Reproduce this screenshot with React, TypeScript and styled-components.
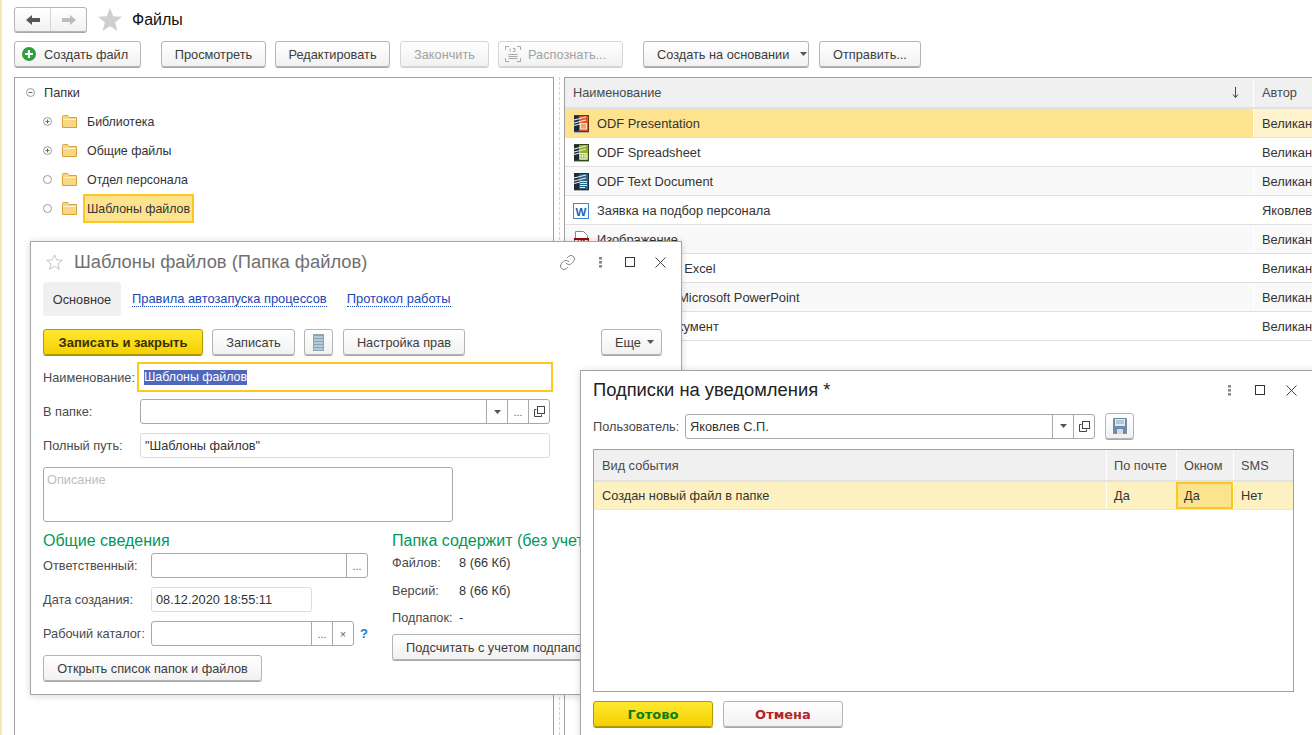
import React from 'react';
import styled, { createGlobalStyle } from 'styled-components';
import { Link } from 'lucide-react';

const GlobalStyle = createGlobalStyle`
  html, body {
    margin: 0;
    padding: 0;
    background: #fff;
  }
  body {
    font-family: "Liberation Sans", Arial, sans-serif;
    font-size: 12.75px;
    color: #333;
  }
  * {
    box-sizing: border-box;
  }
`;

const Page = styled.div`
  position: relative;
  width: 1312px;
  height: 735px;
  overflow: hidden;
  display: flex;
  flex-direction: column;
  padding-left: 12px;
  border-left: 2px solid #f6e8b8;
`;

const TopBar = styled.div`
  display: flex;
  align-items: center;
  height: 25px;
  margin-top: 7px;
`;

const NavGroup = styled.div`
  display: flex;
  width: 73px;
  height: 25px;
  border: 1px solid #b4b4b4;
  border-radius: 3px;
  box-shadow: 0 1px 0 #a8a8a8;
  background: linear-gradient(#fff, #f1f1f1);
`;

const NavCell = styled.div<{ $divided?: boolean }>`
  flex: 1;
  display: flex;
  align-items: center;
  justify-content: center;
  border-left: ${(p) => (p.$divided ? '1px solid #d4d4d4' : 'none')};
`;

const FavStar = styled.svg`
  margin-left: 11px;
`;

const PageTitle = styled.div`
  margin-left: 10px;
  font-size: 16px;
  color: #111;
`;

const Toolbar = styled.div`
  display: flex;
  height: 26px;
  margin-top: 9px;
`;

const Button = styled.div<{ $w: number; $ml?: number; $disabled?: boolean; $pl?: number; $gap?: number }>`
  display: flex;
  align-items: center;
  justify-content: ${(p) => (p.$pl ? 'flex-start' : 'center')};
  gap: ${(p) => p.$gap ?? 6}px;
  flex: none;
  width: ${(p) => p.$w}px;
  height: 26px;
  margin-left: ${(p) => p.$ml ?? 0}px;
  padding-left: ${(p) => p.$pl ?? 0}px;
  border: 1px solid ${(p) => (p.$disabled ? '#d6d6d6' : '#b4b4b4')};
  border-radius: 3px;
  box-shadow: 0 1px 0 ${(p) => (p.$disabled ? '#d0d0d0' : '#a8a8a8')};
  background: linear-gradient(#fff, #f1f1f1);
  color: ${(p) => (p.$disabled ? '#a2a2a2' : '#3c3c3c')};
  white-space: nowrap;
`;

const PrimaryButton = styled(Button)`
  border-color: #b09a00;
  box-shadow: 0 1px 0 #a89400;
  background: linear-gradient(#ffe832, #f5d000);
  color: #3a3000;
  font-weight: bold;
  font-size: 13px;
`;

const DialogButton = styled(Button)<{ $tone: string }>`
  font-family: "DejaVu Sans", sans-serif;
  font-weight: bold;
  font-size: 13px;
  color: ${(p) => p.$tone};
`;

const DialogPrimary = styled(DialogButton)`
  border-color: #b09a00;
  box-shadow: 0 1px 0 #a89400;
  background: linear-gradient(#ffe832, #f5d000);
`;

const Workspace = styled.div`
  flex: 1;
  display: flex;
  min-height: 0;
  margin-top: 10px;
`;

const TreePanel = styled.div`
  flex: none;
  width: 540px;
  border: 1px solid #a0a0a0;
  border-bottom: none;
`;

const TreeRow = styled.div<{ $indent: number }>`
  display: flex;
  align-items: center;
  height: 29px;
  padding-left: ${(p) => p.$indent}px;
`;

const Marker = styled.svg<{ $mr: number }>`
  flex: none;
  margin-right: ${(p) => p.$mr}px;
`;

const TreeLabel = styled.div<{ $selected?: boolean }>`
  display: flex;
  align-items: center;
  height: 29px;
  margin-left: 6px;
  padding: 0 2px;
  font-size: 12.4px;
  border: 2px solid ${(p) => (p.$selected ? '#fcc81e' : 'transparent')};
  background: ${(p) => (p.$selected ? '#fee38f' : 'transparent')};
`;

const Splitter = styled.div`
  flex: none;
  width: 10px;
  display: flex;
  justify-content: center;
  &::before {
    content: '';
    border-left: 1px dashed #d4d4d4;
  }
`;

const ListPanel = styled.div`
  flex: none;
  width: 800px;
  border-top: 1px solid #a0a0a0;
  border-left: 1px solid #a0a0a0;
`;

const ListHead = styled.div`
  display: grid;
  grid-template-columns: 688px 1fr;
  height: 31px;
  background: #f0f0f0;
  border-bottom: 2px solid #e2e2e2;
  color: #4a4a4a;
`;

const HeadCell = styled.div<{ $divided?: boolean }>`
  display: flex;
  align-items: center;
  justify-content: space-between;
  padding: 0 14px 0 8px;
  border-left: ${(p) => (p.$divided ? '1px solid #fff' : 'none')};
`;

const ListRow = styled.div<{ $alt?: boolean }>`
  display: grid;
  grid-template-columns: 688px 1fr;
  height: 29px;
  border-bottom: 1px solid #e0e0e0;
  background: ${(p) => (p.$alt ? '#f9f9f9' : '#fff')};
`;

const ListCell = styled.div<{ $tint?: string; $divided?: boolean }>`
  display: flex;
  align-items: center;
  gap: 8px;
  padding-top: 1px;
  padding-left: 8px;
  border-left: ${(p) => (p.$divided ? '1px solid #fff' : 'none')};
  background: ${(p) => p.$tint ?? 'transparent'};
  font-size: 12.85px;
  white-space: nowrap;
  overflow: hidden;
`;

const Win = styled.div<{ $left: number; $top: number; $w: number }>`
  position: absolute;
  left: ${(p) => p.$left}px;
  top: ${(p) => p.$top}px;
  width: ${(p) => p.$w}px;
  background: #fff;
  border: 1px solid #a6a6a6;
  box-shadow: 0 1px 7px rgba(0, 0, 0, 0.16);
  padding: 0 12px;
`;

const WinHead = styled.div<{ $h: number }>`
  display: flex;
  align-items: center;
  height: ${(p) => p.$h}px;
`;

const WinStar = styled.svg`
  flex: none;
  margin-left: 3px;
  margin-right: 11px;
`;

const WinTitle = styled.div<{ $muted?: boolean }>`
  flex: none;
  font-size: 18.35px;
  color: ${(p) => (p.$muted ? '#707070' : '#222')};
  white-space: nowrap;
`;

const WinTools = styled.div<{ $ml: number }>`
  flex: none;
  display: flex;
  align-items: center;
  margin-left: ${(p) => p.$ml}px;
`;

const WinTool = styled.div<{ $w: number }>`
  display: flex;
  align-items: center;
  justify-content: center;
  width: ${(p) => p.$w}px;
`;

const Tabs = styled.div`
  display: flex;
  align-items: center;
  height: 34px;
`;

const ActiveTab = styled.div`
  display: flex;
  align-items: center;
  justify-content: center;
  width: 78px;
  height: 34px;
  background: #f0f0f0;
  border-radius: 3px;
`;

const TabLink = styled.div<{ $ml: number }>`
  margin-left: ${(p) => p.$ml}px;
  font-size: 12.9px;
  color: #1a46b8;
  border-bottom: 1px dotted #1a46b8;
  line-height: 14px;
  white-space: nowrap;
`;

const Commands = styled.div<{ $mt: number }>`
  display: flex;
  margin-top: ${(p) => p.$mt}px;
`;

const FormRow = styled.div<{ $mt: number; $h: number }>`
  display: flex;
  align-items: center;
  margin-top: ${(p) => p.$mt}px;
  height: ${(p) => p.$h}px;
`;

const Label = styled.div<{ $w: number }>`
  flex: none;
  width: ${(p) => p.$w}px;
  color: #4a4a4a;
  white-space: nowrap;
`;

const FocusInput = styled.div`
  display: flex;
  align-items: center;
  width: 416px;
  height: 30px;
  margin-left: -3px;
  padding-left: 5px;
  border: 2px solid #fcc81e;
`;

const Selection = styled.span`
  background: #4f68bd;
  color: #fff;
  font-size: 12.4px;
  line-height: 15px;
`;

const Field = styled.div<{ $w: number; $soft?: boolean }>`
  display: flex;
  align-items: stretch;
  flex: none;
  width: ${(p) => p.$w}px;
  height: 25px;
  border: 1px solid ${(p) => (p.$soft ? '#dcdcdc' : '#a8a8a8')};
  border-radius: 3px;
  background: #fff;
`;

const FieldText = styled.div`
  flex: 1;
  display: flex;
  align-items: center;
  padding-left: 4px;
  white-space: nowrap;
  color: #333;
`;

const FieldCell = styled.div`
  flex: none;
  display: flex;
  align-items: center;
  justify-content: center;
  width: 21px;
  border-left: 1px solid #a8a8a8;
  color: #666;
  font-size: 11px;
`;

const Memo = styled.div`
  width: 410px;
  height: 55px;
  margin-top: 9px;
  padding: 4px 3px;
  border: 1px solid #a8a8a8;
  border-radius: 3px;
  color: #bdbdbd;
`;

const Columns = styled.div`
  display: flex;
  padding-bottom: 13px;
`;

const LeftCol = styled.div`
  flex: none;
  width: 349px;
`;

const RightCol = styled.div`
  flex: none;
  width: 260px;
`;

const SectionTitle = styled.div`
  margin-top: 9px;
  height: 20px;
  line-height: 20px;
  font-size: 16px;
  color: #00985a;
  white-space: nowrap;
`;

const Value = styled.div`
  color: #333;
  white-space: nowrap;
`;

const Help = styled.div`
  margin-left: 6px;
  color: #1a7cc8;
  font-weight: bold;
  font-size: 13px;
`;

const Grid2 = styled.div`
  width: 701px;
  height: 243px;
  margin-top: 10px;
  border: 1px solid #a0a0a0;
`;

const GridHead = styled.div`
  display: grid;
  grid-template-columns: 512px 70px 57px 1fr;
  height: 32px;
  background: #f0f0f0;
  border-bottom: 2px solid #e2e2e2;
  color: #4a4a4a;
`;

const GridRow = styled.div`
  display: grid;
  grid-template-columns: 512px 70px 57px 1fr;
  height: 28px;
  background: #fdf1c2;
  border-bottom: 1px solid #e6e6e6;
`;

const GridCell = styled.div<{ $first?: boolean; $active?: boolean }>`
  display: flex;
  align-items: center;
  padding-left: ${(p) => (p.$first ? 8 : 7)}px;
  border-left: ${(p) => (p.$first || p.$active ? 'none' : '1px solid #fff')};
  ${(p) => p.$active && 'border: 2px solid #fcc81e; background: #fee38f; padding-left: 6px;'}
`;

const Footer = styled.div`
  display: flex;
  margin-top: 9px;
  padding-bottom: 12px;
`;

const Caret = () => (
  <svg width="7" height="4" viewBox="0 0 7 4">
    <path d="M0 0h7L3.5 4z" fill="#555" />
  </svg>
);

const OpenIcon = () => (
  <svg width="11" height="11" viewBox="0 0 11 11" fill="none" stroke="#444">
    <rect x="3.5" y="0.5" width="7" height="7" fill="#fff" />
    <path d="M2.5 3.5h-2v7h7v-2" />
  </svg>
);

const Dots = () => (
  <svg width="3" height="11" viewBox="0 0 3 11" fill="#8a8a8a">
    <rect y="0" width="3" height="2.6" />
    <rect y="4" width="3" height="2.6" />
    <rect y="8" width="3" height="2.6" />
  </svg>
);

const MaxIcon = () => (
  <svg width="10" height="10" viewBox="0 0 10 10" fill="none" stroke="#333">
    <rect x="0.5" y="0.5" width="9" height="9" />
  </svg>
);

const CloseIcon = () => (
  <svg width="11" height="11" viewBox="0 0 11 11" fill="none" stroke="#444">
    <path d="M0.5 0.5l10 10M10.5 0.5l-10 10" />
  </svg>
);

const TreeMark = ({ kind, mr }: { kind: 'minus' | 'plus' | 'leaf'; mr: number }) => (
  <Marker $mr={mr} width="9" height="9" viewBox="0 0 9 9" fill="none" stroke="#9a9a9a">
    <circle cx="4.5" cy="4.5" r="4" />
    {kind !== 'leaf' && <path d="M2.5 4.5h4" stroke="#666" />}
    {kind === 'plus' && <path d="M4.5 2.5v4" stroke="#666" />}
  </Marker>
);

const Folder = () => (
  <svg width="15" height="13" viewBox="0 0 15 13" style={{ flex: 'none' }}>
    <path d="M0.5 2.5V1.5a1 1 0 011-1h4l1.5 2h7.5v10h-14z" fill="#f7d684" stroke="#d9a13c" />
    <path d="M1 4.5h13" stroke="#fff3cf" />
  </svg>
);

type OdfKind = 'slides' | 'sheet' | 'text';

const odfTones: Record<OdfKind, { frame: string; body: string }> = {
  slides: { frame: '#7a2c10', body: '#dc5a1e' },
  sheet: { frame: '#33481a', body: '#93ae28' },
  text: { frame: '#14304a', body: '#2c6288' },
};

// dark page with the white ODF swoosh in the top corner and the type mark below
const OdfIcon = ({ kind }: { kind: OdfKind }) => (
  <svg width="16" height="18" viewBox="0 0 16 18" style={{ flex: 'none' }}>
    <rect x="1" y="0" width="15" height="17" fill={odfTones[kind].frame} />
    <rect x="6" y="1" width="9" height="15" fill={odfTones[kind].body} />
    <rect x="1" y="1" width="5" height="15" fill="#1c2a38" />
    <path d="M1 5l12-3M1 8l12-3M1 10.5l6-1.5" stroke="#e8ecef" strokeWidth="1.1" />
    {kind === 'slides' && <rect x="7.5" y="8.5" width="6" height="5.5" fill="#f6a070" stroke="#fbe2d0" />}
    {kind === 'sheet' && <path d="M7 9.5h7v5.5H7zM9.5 9.5V15M12 9.5V15M7 12h7" fill="none" stroke="#eef4c8" />}
    {kind === 'text' && <path d="M7 8.5h7M7 10.5h7M7 12.5h7M7 14.5h5" stroke="#dbe8f0" />}
    <rect x="1" y="17" width="15" height="1" fill="#b0b0b0" />
  </svg>
);

const WordIcon = () => (
  <svg width="16" height="16" viewBox="0 0 16 16" style={{ flex: 'none' }}>
    <rect x="0.5" y="0.5" width="15" height="15" fill="#fff" stroke="#3f86d0" />
    <text x="8" y="12.5" textAnchor="middle" fontSize="11.5" fontWeight="bold" fontFamily="Liberation Sans" fill="#1f5fae">
      W
    </text>
  </svg>
);

const PngIcon = () => (
  <svg width="16" height="17" viewBox="0 0 16 17" style={{ flex: 'none' }}>
    <path d="M2.5 0.5h8l4 4v11h-12z" fill="#fff" stroke="#888" />
    <rect x="1" y="7" width="15" height="9" fill="#8c1010" />
    <text x="8.5" y="14" textAnchor="middle" fontSize="6.5" fontWeight="bold" fontFamily="Liberation Sans" fill="#fff">
      PNG
    </text>
  </svg>
);

const files = [
  { name: 'ODF Presentation', author: 'Великанова Е.В.', icon: <OdfIcon kind="slides" /> },
  { name: 'ODF Spreadsheet', author: 'Великанова Е.В.', icon: <OdfIcon kind="sheet" /> },
  { name: 'ODF Text Document', author: 'Великанова Е.В.', icon: <OdfIcon kind="text" /> },
  { name: 'Заявка на подбор персонала', author: 'Яковлев С.П.', icon: <WordIcon /> },
  { name: 'Изображение', author: 'Великанова Е.В.', icon: <PngIcon /> },
  { name: 'Лист Microsoft Excel', author: 'Великанова Е.В.', icon: <OdfIcon kind="sheet" /> },
  { name: 'Презентация Microsoft PowerPoint', author: 'Великанова Е.В.', icon: <OdfIcon kind="slides" /> },
  { name: 'Текстовый документ', author: 'Великанова Е.В.', icon: <OdfIcon kind="text" /> },
];

const folders = [
  { name: 'Библиотека', kind: 'plus' as const },
  { name: 'Общие файлы', kind: 'plus' as const },
  { name: 'Отдел персонала', kind: 'leaf' as const },
  { name: 'Шаблоны файлов', kind: 'leaf' as const, selected: true },
];

const App: React.FC = () => {
  return (
    <Page>
      <GlobalStyle />
      <TopBar>
        <NavGroup>
          <NavCell>
            <svg width="14" height="10" viewBox="0 0 14 10">
              <path d="M0 5l6-5v3h8v4H6v3z" fill="#555" />
            </svg>
          </NavCell>
          <NavCell $divided>
            <svg width="14" height="10" viewBox="0 0 14 10">
              <path d="M14 5L8 0v3H0v4h8v3z" fill="#bcbcbc" />
            </svg>
          </NavCell>
        </NavGroup>
        <FavStar width="24" height="23" viewBox="0 0 24 23">
          <path d="M12 0l3.2 8.3 8.8.5-6.8 5.6 2.2 8.6L12 18.2 4.6 23l2.2-8.6L0 8.8l8.8-.5z" fill="#cfcfcf" />
        </FavStar>
        <PageTitle>Файлы</PageTitle>
      </TopBar>

      <Toolbar>
        <Button $w={127} $pl={7} $gap={8}>
          <svg width="14" height="14" viewBox="0 0 14 14">
            <circle cx="7" cy="7" r="7" fill="#2f9e3f" />
            <path d="M7 3v8M3 7h8" stroke="#fff" strokeWidth="2.2" />
          </svg>
          Создать файл
        </Button>
        <Button $w={105} $ml={20}>Просмотреть</Button>
        <Button $w={115} $ml={9}>Редактировать</Button>
        <Button $w={89} $ml={10} $disabled>Закончить</Button>
        <Button $w={125} $ml={9} $disabled $pl={6} $gap={7}>
          <svg width="16" height="16" viewBox="0 0 16 16" fill="none" stroke="#a8a8a8">
            <path d="M0.5 4V0.5H4M12 0.5h3.5V4M15.5 12v3.5H12M4 15.5H0.5V12" />
            <path d="M3.5 8.5h9M3.5 10.5h9M3.5 12.5h9" />
            <path d="M5 2.5v3M8 2.5H10v3H8" />
          </svg>
          Распознать...
        </Button>
        <Button $w={166} $ml={20} $pl={13} $gap={11}>
          Создать на основании
          <Caret />
        </Button>
        <Button $w={102} $ml={10}>Отправить...</Button>
      </Toolbar>

      <Workspace>
        <TreePanel>
          <TreeRow $indent={11}>
            <TreeMark kind="minus" mr={9} />
            Папки
          </TreeRow>
          {folders.map((f) => (
            <TreeRow key={f.name} $indent={28}>
              <TreeMark kind={f.kind} mr={10} />
              <Folder />
              <TreeLabel $selected={f.selected}>{f.name}</TreeLabel>
            </TreeRow>
          ))}
        </TreePanel>
        <Splitter />
        <ListPanel>
          <ListHead>
            <HeadCell>
              Наименование
              <svg width="7" height="11" viewBox="0 0 7 11">
                <path d="M3.5 0v10M1 7.5l2.5 3 2.5-3" fill="none" stroke="#444" />
              </svg>
            </HeadCell>
            <HeadCell $divided>Автор</HeadCell>
          </ListHead>
          {files.map((f, i) => (
            <ListRow key={f.name} $alt={i % 2 === 0}>
              <ListCell $tint={i === 0 ? '#fee38f' : undefined}>
                {f.icon}
                {f.name}
              </ListCell>
              <ListCell $divided $tint={i === 0 ? '#fef3cd' : undefined}>
                {f.author}
              </ListCell>
            </ListRow>
          ))}
        </ListPanel>
      </Workspace>

      <Win $left={28} $top={241} $w={652}>
        <WinHead $h={40}>
          <WinStar width="17" height="16" viewBox="0 0 17 16">
            <path d="M8.5 0.8l2.2 5.1 5.6.4-4.3 3.6 1.4 5.4-4.9-3-4.9 3 1.4-5.4L0.7 6.3l5.6-.4z" fill="none" stroke="#c4c4c4" />
          </WinStar>
          <WinTitle $muted>Шаблоны файлов (Папка файлов)</WinTitle>
          <WinTools $ml={182}>
            <WinTool $w={36}>
              <Link size={17} strokeWidth={1} color="#555" />
            </WinTool>
            <WinTool $w={30}>
              <Dots />
            </WinTool>
            <WinTool $w={30}>
              <MaxIcon />
            </WinTool>
            <WinTool $w={30}>
              <CloseIcon />
            </WinTool>
          </WinTools>
        </WinHead>
        <Tabs>
          <ActiveTab>Основное</ActiveTab>
          <TabLink $ml={11}>Правила автозапуска процессов</TabLink>
          <TabLink $ml={20}>Протокол работы</TabLink>
        </Tabs>
        <Commands $mt={13}>
          <PrimaryButton $w={160}>Записать и закрыть</PrimaryButton>
          <Button $w={83} $ml={9}>Записать</Button>
          <Button $w={29} $ml={9}>
            <svg width="11" height="17" viewBox="0 0 11 17">
              <rect width="11" height="17" fill="#8aa4b8" />
              <path d="M1 3h9M1 6h9M1 9h9M1 12h9M1 15h9" stroke="#e4edf3" />
            </svg>
          </Button>
          <Button $w={122} $ml={10}>Настройка прав</Button>
          <Button $w={61} $ml={136} $pl={13}>
            Еще
            <Caret />
          </Button>
        </Commands>
        <FormRow $mt={7} $h={30}>
          <Label $w={97}>Наименование:</Label>
          <FocusInput>
            <Selection>Шаблоны файлов</Selection>
          </FocusInput>
        </FormRow>
        <FormRow $mt={7} $h={25}>
          <Label $w={97}>В папке:</Label>
          <Field $w={410}>
            <FieldText />
            <FieldCell>
              <Caret />
            </FieldCell>
            <FieldCell>...</FieldCell>
            <FieldCell>
              <OpenIcon />
            </FieldCell>
          </Field>
        </FormRow>
        <FormRow $mt={9} $h={25}>
          <Label $w={97}>Полный путь:</Label>
          <Field $w={410} $soft>
            <FieldText>"Шаблоны файлов"</FieldText>
          </Field>
        </FormRow>
        <Memo>Описание</Memo>
        <Columns>
          <LeftCol>
            <SectionTitle>Общие сведения</SectionTitle>
            <FormRow $mt={2} $h={25}>
              <Label $w={108}>Ответственный:</Label>
              <Field $w={217}>
                <FieldText />
                <FieldCell>...</FieldCell>
              </Field>
            </FormRow>
            <FormRow $mt={9} $h={25}>
              <Label $w={108}>Дата создания:</Label>
              <Field $w={161} $soft>
                <FieldText>08.12.2020 18:55:11</FieldText>
              </Field>
            </FormRow>
            <FormRow $mt={9} $h={25}>
              <Label $w={108}>Рабочий каталог:</Label>
              <Field $w={203}>
                <FieldText />
                <FieldCell>...</FieldCell>
                <FieldCell>×</FieldCell>
              </Field>
              <Help>?</Help>
            </FormRow>
            <Commands $mt={9}>
              <Button $w={219}>Открыть список папок и файлов</Button>
            </Commands>
          </LeftCol>
          <RightCol>
            <SectionTitle>Папка содержит (без учета подпапок)</SectionTitle>
            <FormRow $mt={1} $h={20}>
              <Label $w={67}>Файлов:</Label>
              <Value>8 (66 Кб)</Value>
            </FormRow>
            <FormRow $mt={8} $h={20}>
              <Label $w={67}>Версий:</Label>
              <Value>8 (66 Кб)</Value>
            </FormRow>
            <FormRow $mt={7} $h={20}>
              <Label $w={67}>Подпапок:</Label>
              <Value>-</Value>
            </FormRow>
            <Commands $mt={7}>
              <Button $w={222} $pl={13}>Подсчитать с учетом подпапок</Button>
            </Commands>
          </RightCol>
        </Columns>
      </Win>

      <Win $left={578} $top={370} $w={750}>
        <WinHead $h={38}>
          <WinTitle>Подписки на уведомления *</WinTitle>
          <WinTools $ml={384}>
            <WinTool $w={30}>
              <Dots />
            </WinTool>
            <WinTool $w={32}>
              <MaxIcon />
            </WinTool>
            <WinTool $w={30}>
              <CloseIcon />
            </WinTool>
          </WinTools>
        </WinHead>
        <FormRow $mt={4} $h={26}>
          <Label $w={92}>Пользователь:</Label>
          <Field $w={410}>
            <FieldText>Яковлев С.П.</FieldText>
            <FieldCell>
              <Caret />
            </FieldCell>
            <FieldCell>
              <OpenIcon />
            </FieldCell>
          </Field>
          <Button $w={29} $ml={10}>
            <svg width="14" height="16" viewBox="0 0 14 16">
              <rect width="14" height="16" rx="1" fill="#6f8ba8" />
              <rect x="2" y="1" width="10" height="7" fill="#dfe8ef" />
              <path d="M3 3h8M3 5h8" stroke="#8aa4b8" />
              <rect x="4" y="11" width="6" height="5" fill="#cfd9e2" />
            </svg>
          </Button>
        </FormRow>
        <Grid2>
          <GridHead>
            <GridCell $first>Вид события</GridCell>
            <GridCell>По почте</GridCell>
            <GridCell>Окном</GridCell>
            <GridCell>SMS</GridCell>
          </GridHead>
          <GridRow>
            <GridCell $first>Создан новый файл в папке</GridCell>
            <GridCell>Да</GridCell>
            <GridCell $active>Да</GridCell>
            <GridCell>Нет</GridCell>
          </GridRow>
        </Grid2>
        <Footer>
          <DialogPrimary $w={120} $tone="#0a7d12">Готово</DialogPrimary>
          <DialogButton $w={120} $ml={10} $tone="#b4232a">Отмена</DialogButton>
        </Footer>
      </Win>
    </Page>
  );
};

export default App;
